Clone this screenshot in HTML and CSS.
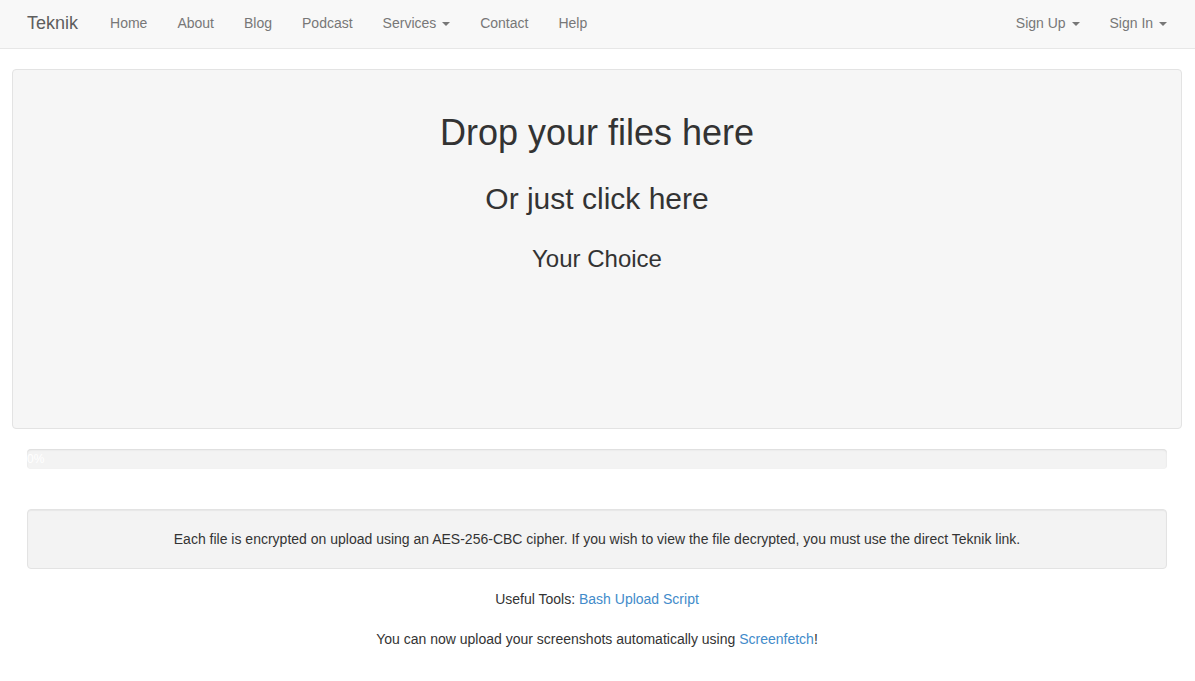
FILE: index.html
```html
<!DOCTYPE html>
<html lang="en">
<head>
<meta charset="utf-8">
<title>Teknik Upload</title>
<link rel="stylesheet" href="styles.css">
</head>
<body>
<nav class="navbar">
  <div class="container nav-inner">
    <div class="nav-left">
      <a class="brand" href="#">Teknik</a>
      <ul class="nav">
        <li><a href="#">Home</a></li>
        <li><a href="#">About</a></li>
        <li><a href="#">Blog</a></li>
        <li><a href="#">Podcast</a></li>
        <li><a href="#">Services <span class="caret"></span></a></li>
        <li><a href="#">Contact</a></li>
        <li><a href="#">Help</a></li>
      </ul>
    </div>
    <ul class="nav nav-right">
      <li><a href="#">Sign Up <span class="caret"></span></a></li>
      <li><a href="#">Sign In <span class="caret"></span></a></li>
    </ul>
  </div>
</nav>
<main class="container">
  <div class="dropzone">
    <h1>Drop your files here</h1>
    <h2>Or just click here</h2>
    <h3>Your Choice</h3>
  </div>
  <div class="progress"><div class="progress-bar">0%</div></div>
  <div class="well">Each file is encrypted on upload using an AES-256-CBC cipher. If you wish to view the file decrypted, you must use the direct Teknik link.</div>
  <p class="center">Useful Tools: <a href="#">Bash Upload Script</a></p>
  <p class="center">You can now upload your screenshots automatically using <a href="#">Screenfetch</a>!</p>
</main>
</body>
</html>
```
FILE: styles.css
```css
* { box-sizing: border-box; }
html, body { margin: 0; padding: 0; }
body {
  font-family: "Liberation Sans", Arial, Helvetica, sans-serif;
  font-size: 14px;
  line-height: 20px;
  color: #333;
  background: #fff;
}
a { color: #428bca; text-decoration: none; }
.container {
  margin: 0 13px 0 12px;
  padding: 0 15px;
}
.navbar {
  background: #f8f8f8;
  border-bottom: 1px solid #e7e7e7;
  height: 49px;
  margin-bottom: 20px;
}
.nav-inner {
  display: flex;
  justify-content: space-between;
  height: 48px;
}
.nav-left { display: flex; }
.brand {
  display: block;
  margin-left: -15px;
  padding: 13px 17px 15px 15px;
  font-size: 18px;
  line-height: 20px;
  color: #5e5e5e;
  height: 48px;
}
.nav {
  list-style: none;
  margin: 0;
  padding: 0;
  display: flex;
}
.nav-right { margin-right: -15px; }
.nav a {
  display: block;
  padding: 13px 15px 15px;
  line-height: 20px;
  color: #777;
}
.caret {
  display: inline-block;
  width: 0;
  height: 0;
  margin-left: 2px;
  vertical-align: middle;
  border-top: 4px solid #777;
  border-left: 4px solid transparent;
  border-right: 4px solid transparent;
}
.dropzone {
  margin: 0 -15px;
  height: 360px;
  background: #f6f6f6;
  border: 1px solid #e3e3e3;
  border-radius: 4px;
  padding-top: 23px;
  display: flex;
  flex-direction: column;
  align-items: center;
}
.dropzone h1, .dropzone h2, .dropzone h3 {
  font-weight: 500;
  line-height: 1.1;
  margin: 20px 0 10px;
  color: #333;
}
.dropzone h1 { font-size: 36px; }
.dropzone h2 { font-size: 30px; margin-top: 19px; }
.dropzone h3 { font-size: 24px; margin-top: 21px; }
.progress {
  margin-top: 20px;
  margin-bottom: 20px;
  height: 20px;
  background: #f3f3f3;
  border-radius: 4px;
  box-shadow: inset 0 1px 2px rgba(0,0,0,0.1);
}
.progress-bar {
  width: 0;
  height: 20px;
  font-size: 12px;
  line-height: 20px;
  color: #fff;
  white-space: nowrap;
}
.well {
  margin-top: 40px;
  margin-bottom: 20px;
  padding: 19px;
  background: #f3f3f3;
  border: 1px solid #e3e3e3;
  border-radius: 4px;
  box-shadow: inset 0 1px 1px rgba(0,0,0,0.05);
  text-align: center;
}
.center {
  text-align: center;
  margin: 0 0 20px;
}
```
